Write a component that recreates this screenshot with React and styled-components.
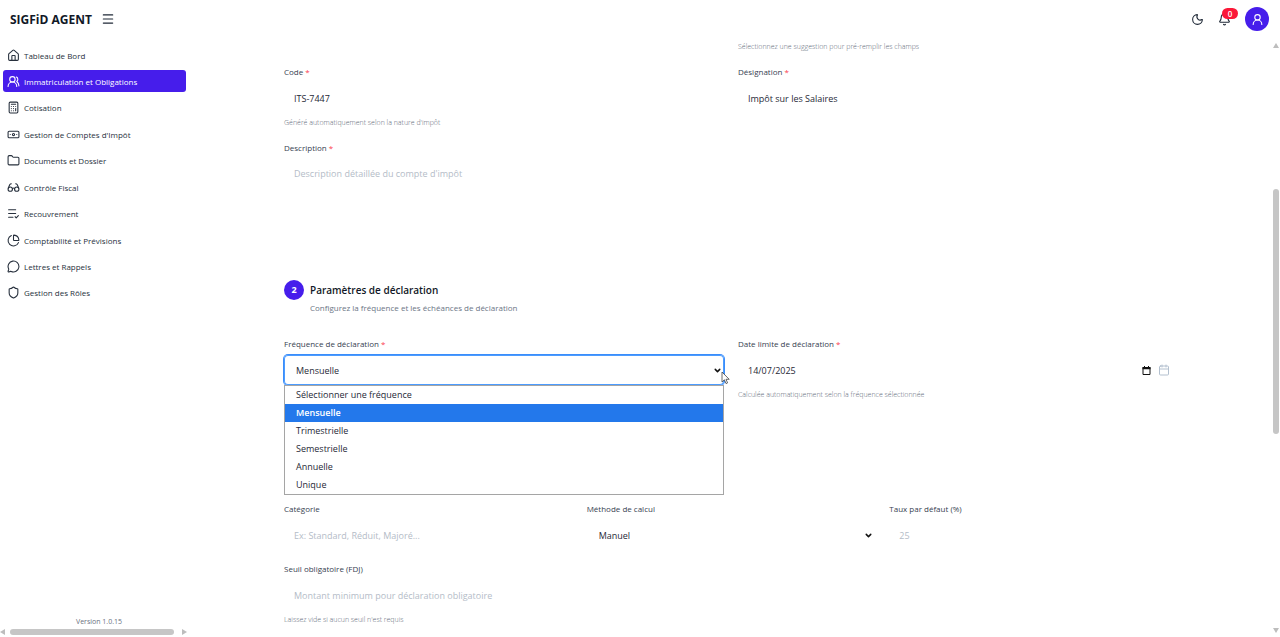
import React, { useState } from 'react';
import styled, { createGlobalStyle, css } from 'styled-components';
import {
  House,
  UsersRound,
  Calculator,
  Banknote,
  Folder,
  Glasses,
  ListCheck,
  ChartPie,
  MessageCircle,
  Shield,
  Menu,
  Moon,
  Bell,
  UserRound,
  Calendar,
  ChevronDown,
} from 'lucide-react';

const GlobalStyle = createGlobalStyle`
  * {
    box-sizing: border-box;
  }
  body {
    margin: 0;
    background: #fff;
    color: #1f2937;
    font-family: 'Open Sans', 'Noto Sans', sans-serif;
    font-size: 8px;
  }
  button, input, select, textarea {
    font-family: inherit;
  }
`;

// Layout
const Page = styled.div`
  display: flex;
  flex-direction: column;
  height: 100vh;
  overflow: hidden;
`;

const TopBar = styled.header`
  display: flex;
  align-items: center;
  flex-shrink: 0;
  height: 38px;
  padding: 0 11px 0 10px;
`;

const Brand = styled.h1`
  margin: 0 9px 0 0;
  font-size: 12px;
  font-weight: 700;
  color: #111827;
`;

const IconButton = styled.button`
  position: relative;
  display: flex;
  padding: 0;
  border: none;
  background: none;
  color: #1f2937;
  cursor: pointer;
`;

const Actions = styled.div`
  display: flex;
  align-items: center;
  gap: 14px;
  margin-left: auto;
`;

const Count = styled.span`
  position: absolute;
  top: -5px;
  left: 4px;
  width: 16px;
  height: 11px;
  border-radius: 6px;
  background: #fb1838;
  color: #fff;
  font-size: 8px;
  font-weight: 600;
  line-height: 11px;
  text-align: center;
`;

const Avatar = styled.button`
  display: flex;
  align-items: center;
  justify-content: center;
  width: 24px;
  height: 24px;
  padding: 0;
  border: none;
  border-radius: 50%;
  background: #461deb;
  color: #fff;
  cursor: pointer;
`;

const Body = styled.div`
  display: flex;
  flex: 1;
  min-height: 0;
`;

const Sidebar = styled.aside`
  display: flex;
  flex-direction: column;
  flex-shrink: 0;
  width: 188px;
  padding: 6px 0 1px;
`;

const Nav = styled.nav`
  display: flex;
  flex-direction: column;
  justify-content: space-between;
  height: 260px;
  padding: 0 2px 0 3px;
`;

const NavLink = styled.a`
  display: flex;
  align-items: center;
  gap: 4px;
  height: 22px;
  padding: 0 4px;
  border-radius: 3px;
  color: #27303d;
  text-decoration: none;
  white-space: nowrap;
  ${({ $active }) =>
    $active &&
    css`
      background: #461deb;
      color: #fff;
      font-weight: 500;
    `}
`;

const Version = styled.p`
  margin: auto 0 0;
  padding-left: 10px;
  color: #6b7280;
  font-size: 7px;
  line-height: 12px;
  text-align: center;
`;

// Scrollbars
const Track = styled.div`
  display: flex;
  flex-direction: ${({ $vertical }) => ($vertical ? 'column' : 'row')};
  align-items: center;
  flex-shrink: 0;
  ${({ $vertical }) => ($vertical ? 'width: 8px; padding: 5px 0 3px;' : 'height: 8px; padding: 0;')}
`;

const Thumb = styled.div`
  border-radius: 3px;
  background: #c6c6c6;
  ${({ $vertical }) => ($vertical ? 'width: 6px; flex: 246;' : 'height: 6px; flex: 1; margin: 0 8px 0 4px;')}
`;

const Spacer = styled.div`
  flex: ${({ $size }) => $size};
`;

// Form
const Main = styled.main`
  flex: 1;
  min-width: 0;
  overflow: hidden;
  padding: 3px 24px 0 26px;
`;

const Form = styled.form`
  max-width: 894px;
  margin: 0 auto;
`;

const Row = styled.div`
  display: grid;
  grid-template-columns: repeat(${({ $cols }) => $cols || 1}, minmax(0, 1fr));
  gap: 14px;
  margin-bottom: 11px;
`;

const Label = styled.label`
  display: block;
  margin-bottom: 3px;
  color: #374151;
  font-weight: 500;
  line-height: 16px;
`;

const Required = styled.span`
  color: #fb3b4e;
`;

const Control = styled.div`
  position: relative;
`;

const fieldStyle = css`
  display: block;
  width: 100%;
  height: 30px;
  padding: 0 10px;
  border: none;
  border-radius: 4px;
  background: #fff;
  color: #1f2937;
  font-size: 9px;
  outline: none;
  &::placeholder {
    color: #b4bcc7;
    opacity: 1;
  }
`;

const Input = styled.input`
  ${fieldStyle}
`;

const TextArea = styled.textarea`
  ${fieldStyle}
  height: 110px;
  padding: 7px 10px;
  line-height: 16px;
  resize: none;
`;

const Select = styled.select`
  ${fieldStyle}
  padding: 0 12px;
  appearance: none;
  ${({ $open }) => $open && 'box-shadow: 0 0 0 1px #3b8dfa, inset 0 0 0 1px #4c9cff;'}
`;

const FieldIcons = styled.span`
  position: absolute;
  top: 0;
  right: ${({ $right }) => $right}px;
  display: flex;
  align-items: center;
  gap: 7px;
  height: 30px;
  color: #111;
  pointer-events: none;
`;

const HelpText = styled.p`
  margin: 0;
  color: #5f6b7a;
  font-size: 7px;
  font-weight: 300;
  line-height: 12px;
`;

const Hint = styled(HelpText)`
  margin-top: 4px;
`;

const Suggestion = styled(HelpText)`
  grid-column: 2;
`;

const Options = styled.ul`
  position: absolute;
  top: 100%;
  left: 0;
  right: 0;
  z-index: 1;
  margin: 0;
  padding: 0;
  border: 1px solid #a5a5a5;
  background: #fff;
  list-style: none;
`;

const Option = styled.li`
  height: 18px;
  padding: 0 11px;
  font-size: 9px;
  line-height: 18px;
  ${({ $selected }) =>
    $selected &&
    css`
      background: #2378eb;
      color: #fff;
      font-weight: 600;
    `}
`;

const Pointer = styled.svg`
  position: absolute;
  top: 16px;
  right: -6px;
  z-index: 2;
`;

const SectionHead = styled.div`
  display: grid;
  grid-template-columns: 20px 1fr;
  column-gap: 6px;
  margin-bottom: 22px;
`;

const Step = styled.span`
  width: 20px;
  height: 20px;
  border-radius: 50%;
  background: #461deb;
  color: #fff;
  font-size: 9px;
  font-weight: 700;
  line-height: 20px;
  text-align: center;
`;

const SectionTitle = styled.h2`
  margin: 0;
  color: #111827;
  font-size: 10px;
  font-weight: 600;
  line-height: 20px;
`;

const SectionText = styled.p`
  grid-column: 2;
  margin: 2px 0 0;
  color: #6b7585;
  line-height: 12px;
`;

const SectionGap = styled.div`
  height: ${({ $size }) => $size}px;
`;

const menu = [
  { label: 'Tableau de Bord', icon: House },
  { label: 'Immatriculation et Obligations', icon: UsersRound, active: true },
  { label: 'Cotisation', icon: Calculator },
  { label: "Gestion de Comptes d'Impôt", icon: Banknote },
  { label: 'Documents et Dossier', icon: Folder },
  { label: 'Contrôle Fiscal', icon: Glasses },
  { label: 'Recouvrement', icon: ListCheck },
  { label: 'Comptabilité et Prévisions', icon: ChartPie },
  { label: 'Lettres et Rappels', icon: MessageCircle },
  { label: 'Gestion des Rôles', icon: Shield },
];

const frequencies = ['Mensuelle', 'Trimestrielle', 'Semestrielle', 'Annuelle', 'Unique'];

const arrows = {
  up: '0,5 3,0 6,5',
  down: '0,0 6,0 3,5',
  left: '5,0 5,6 0,3',
  right: '0,0 5,3 0,6',
};

const Arrow = ({ dir }) => (
  <svg width="6" height="6" viewBox="0 0 6 6">
    <polygon points={arrows[dir]} fill="#bdbdbd" />
  </svg>
);

const DateIcon = () => (
  <svg width="9" height="9" viewBox="0 0 9 9">
    <path d="M1 1.5h7v7H1z" fill="none" stroke="#111" />
    <path d="M.5 1h8v2.2h-8zM2 0h1v1H2zM6 0h1v1H6z" fill="#111" />
  </svg>
);

const Field = ({ id, label, required, hint, children }) => (
  <div>
    <Label htmlFor={id}>
      {label} {required && <Required>*</Required>}
    </Label>
    <Control>{children}</Control>
    {hint && <Hint>{hint}</Hint>}
  </div>
);

const App = () => {
  const [frequency, setFrequency] = useState('Mensuelle');
  const [open, setOpen] = useState(true);

  const choose = (value) => {
    setFrequency(value);
    setOpen(false);
  };

  return (
    <Page>
      <GlobalStyle />
      <TopBar>
        <Brand>SIGFiD AGENT</Brand>
        <IconButton type="button" aria-label="Menu"><Menu size={14} strokeWidth={2} /></IconButton>
        <Actions>
          <IconButton type="button" aria-label="Thème"><Moon size={13} /></IconButton>
          <IconButton type="button" aria-label="Notifications">
            <Bell size={13} />
            <Count>0</Count>
          </IconButton>
          <Avatar type="button" aria-label="Profil"><UserRound size={13} /></Avatar>
        </Actions>
      </TopBar>

      <Body>
        <Sidebar>
          <Nav>
            {menu.map(({ label, icon: Icon, active }) => (
              <NavLink key={label} href="#" $active={active}>
                <Icon size={13} />
                {label}
              </NavLink>
            ))}
          </Nav>
          <Version>Version 1.0.15</Version>
          <Track>
            <Arrow dir="left" />
            <Thumb />
            <Arrow dir="right" />
          </Track>
        </Sidebar>

        <Main>
          <Form onSubmit={(e) => e.preventDefault()}>
            <Row $cols={2}>
              <Suggestion>Sélectionnez une suggestion pour pré-remplir les champs</Suggestion>
            </Row>
            <Row $cols={2}>
              <Field id="code" label="Code" required hint="Généré automatiquement selon la nature d'impôt">
                <Input id="code" defaultValue="ITS-7447" />
              </Field>
              <Field id="designation" label="Désignation" required>
                <Input id="designation" defaultValue="Impôt sur les Salaires" />
              </Field>
            </Row>
            <Row>
              <Field id="description" label="Description" required>
                <TextArea id="description" placeholder="Description détaillée du compte d'impôt" />
              </Field>
            </Row>

            <SectionHead>
              <Step>2</Step>
              <SectionTitle>Paramètres de déclaration</SectionTitle>
              <SectionText>Configurez la fréquence et les échéances de déclaration</SectionText>
            </SectionHead>
            <Row $cols={2}>
              <Field id="frequency" label="Fréquence de déclaration" required>
                <Select
                  id="frequency"
                  $open={open}
                  value={frequency}
                  onChange={(e) => setFrequency(e.target.value)}
                >
                  <option value="">Sélectionner une fréquence</option>
                  {frequencies.map((f) => <option key={f}>{f}</option>)}
                </Select>
                <FieldIcons $right={2}><ChevronDown size={9} strokeWidth={4} /></FieldIcons>
                {open && (
                  <Options role="listbox" aria-label="Fréquence de déclaration">
                    <Option role="option" onClick={() => choose('')}>Sélectionner une fréquence</Option>
                    {frequencies.map((f) => (
                      <Option
                        key={f}
                        role="option"
                        aria-selected={f === frequency}
                        $selected={f === frequency}
                        onClick={() => choose(f)}
                      >
                        {f}
                      </Option>
                    ))}
                  </Options>
                )}
                <Pointer width="9" height="14" viewBox="0 0 9 14">
                  <path d="M1 1v10l2.4-2.2L5 12.6l1.6-.7L5 8.3h3.2z" fill="#fff" stroke="#444" strokeWidth=".8" />
                </Pointer>
              </Field>
              <Field
                id="deadline"
                label="Date limite de déclaration"
                required
                hint="Calculée automatiquement selon la fréquence sélectionnée"
              >
                <Input id="deadline" defaultValue="14/07/2025" />
                <FieldIcons $right={8}>
                  <DateIcon />
                  <Calendar size={12} strokeWidth={2} color="#b3c0cf" />
                </FieldIcons>
              </Field>
            </Row>

            <SectionGap $size={89} />

            <Row $cols={3}>
              <Field id="category" label="Catégorie">
                <Input id="category" placeholder="Ex: Standard, Réduit, Majoré..." />
              </Field>
              <Field id="method" label="Méthode de calcul">
                <Select id="method" defaultValue="Manuel">
                  <option>Manuel</option>
                  <option>Automatique</option>
                </Select>
                <FieldIcons $right={2}><ChevronDown size={9} strokeWidth={4} /></FieldIcons>
              </Field>
              <Field id="rate" label="Taux par défaut (%)">
                <Input id="rate" placeholder="25" />
              </Field>
            </Row>
            <Row>
              <Field id="threshold" label="Seuil obligatoire (FDJ)" hint="Laissez vide si aucun seuil n'est requis">
                <Input id="threshold" placeholder="Montant minimum pour déclaration obligatoire" />
              </Field>
            </Row>
          </Form>
        </Main>

        <Track $vertical>
          <Arrow dir="up" />
          <Spacer $size={140} />
          <Thumb $vertical />
          <Spacer $size={194} />
          <Arrow dir="down" />
        </Track>
      </Body>
    </Page>
  );
};

export default App;
